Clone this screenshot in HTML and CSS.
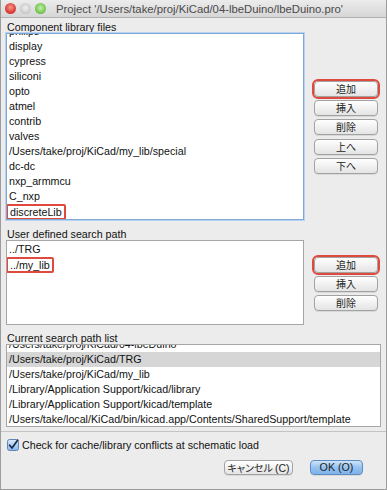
FILE: index.html
```html
<!DOCTYPE html>
<html lang="ja">
<head>
  <meta charset="UTF-8" />
  <title>Project</title>
  <link rel="stylesheet" href="styles.css">
</head>
<body>
  <div class="window">
    <div class="titlebar">
      <span class="light red"></span>
      <span class="light grey"></span>
      <span class="light green"></span>
      <span class="title">Project '/Users/take/proj/KiCad/04-lbeDuino/lbeDuino.pro'</span>
    </div>
    <div class="content">
      <div class="label">Component library files</div>
      <div class="group">
        <div class="list focus lib-list">
          <div class="item first"><span>philips</span></div>
          <div class="item">display</div>
          <div class="item">cypress</div>
          <div class="item">siliconi</div>
          <div class="item">opto</div>
          <div class="item">atmel</div>
          <div class="item">contrib</div>
          <div class="item">valves</div>
          <div class="item">/Users/take/proj/KiCad/my_lib/special</div>
          <div class="item">dc-dc</div>
          <div class="item">nxp_armmcu</div>
          <div class="item">C_nxp</div>
          <div class="item"><span class="mark">discreteLib</span></div>
        </div>
        <div class="btns lib-btns">
          <button class="btn marked">追加</button>
          <button class="btn">挿入</button>
          <button class="btn">削除</button>
          <button class="btn spaced">上へ</button>
          <button class="btn">下へ</button>
        </div>
      </div>

      <div class="label label-path">User defined search path</div>
      <div class="group">
        <div class="list path-list">
          <div class="item">../TRG</div>
          <div class="item"><span class="mark">../my_lib</span></div>
        </div>
        <div class="btns path-btns">
          <button class="btn marked">追加</button>
          <button class="btn">挿入</button>
          <button class="btn">削除</button>
        </div>
      </div>

      <div class="label label-current">Current search path list</div>
      <div class="list current-list">
        <div class="item first"><span>/Users/take/proj/KiCad/04-lbeDuino</span></div>
        <div class="item selected">/Users/take/proj/KiCad/TRG</div>
        <div class="item">/Users/take/proj/KiCad/my_lib</div>
        <div class="item">/Library/Application Support/kicad/library</div>
        <div class="item">/Library/Application Support/kicad/template</div>
        <div class="item">/Users/take/local/KiCad/bin/kicad.app/Contents/SharedSupport/template</div>
      </div>
    </div>

    <div class="footer">
      <label class="check">
        <svg width="12" height="12" viewBox="0 0 12 12">
          <defs>
            <linearGradient id="cb" x1="0" y1="0" x2="0" y2="1">
              <stop offset="0" stop-color="#dcebfb"/>
              <stop offset="1" stop-color="#86b6ea"/>
            </linearGradient>
          </defs>
          <rect x="0.5" y="0.5" width="11" height="11" rx="2" fill="url(#cb)" stroke="#5f86b3"/>
          <path d="M2.6 6.2 L5 9 L10.6 1.2" fill="none" stroke="#1b2849" stroke-width="1.7" stroke-linecap="round" stroke-linejoin="round"/>
        </svg>
        <span>Check for cache/library conflicts at schematic load</span>
      </label>
      <div class="actions">
        <button class="btn cancel">キャンセル <span class="key">(C)</span></button>
        <button class="btn ok">OK (O)</button>
      </div>
    </div>
  </div>
</body>
</html>
```

FILE: styles.css
```css
* { box-sizing: border-box; }
body {
  margin: 0;
  background: #ececec;
  font-family: "Liberation Sans", "Noto Sans CJK JP", sans-serif;
  font-size: 10.7px;
  color: #111;
}
.window {
  width: 387px;
  height: 490px;
  background: #ececec;
  border-left: 1px solid #9c9c9c;
  border-right: 1px solid #9c9c9c;
  border-bottom: 1px solid #9c9c9c;
  overflow: hidden;
}
.titlebar {
  height: 18px;
  display: flex;
  align-items: center;
  padding-left: 4px;
  gap: 4px;
  background: linear-gradient(#ececec, #d6d6d6);
  border-bottom: 1px solid #b2b2b2;
}
.light {
  width: 11px;
  height: 11px;
  border-radius: 50%;
}
.red { background: radial-gradient(circle at 50% 40%, #f39a92, #dc3e36 60%, #b4302a); }
.grey { background: radial-gradient(circle at 50% 45%, #eeeeee, #d2d2d2 55%, #a8a8a8); }
.green { background: radial-gradient(circle at 50% 45%, #c9efb5, #7bcd57 55%, #4e9a35); }
.title {
  margin-left: 6px;
  font-size: 11.3px;
  color: #4a4a4a;
  white-space: nowrap;
}
.content {
  padding: 3px 5px 0 5px;
}
.label {
  height: 12px;
  line-height: 12px;
  padding-left: 1px;
}
.label-path { margin-top: 8px; }
.label-current { margin-top: 7px; }
.group {
  display: flex;
}
.list {
  background: #fff;
  border: 1px solid #a6a6a6;
  overflow: hidden;
  white-space: nowrap;
}
.list.focus {
  border-color: #7ea8d8;
  box-shadow: 0 0 0 1px #b9d2ef;
}
.item {
  height: 15px;
  line-height: 15px;
  padding-left: 2px;
}
/* the lists are scrolled: only the lower part of the first row shows */
.item.first {
  overflow: hidden;
  display: flex;
  align-items: flex-end;
}
.item.first span { display: block; line-height: 15px; flex: none; }
.lib-list { width: 298px; height: 187px; }
.lib-list .first { height: 5px; }
.path-list { width: 298px; height: 85px; padding-top: 1px; }
.current-list { width: 375px; height: 83px; }
.current-list .first { height: 7px; }
.selected { background: #d6d6d6; }
.mark {
  display: inline-block;
  line-height: 12px;
  border: 2px solid #e0493d;
  border-radius: 2px;
  padding: 0 2px;
  margin-left: -3px;
}
.btns {
  display: flex;
  flex-direction: column;
  gap: 3px;
  margin-left: 10px;
}
.lib-btns { padding-top: 48px; }
.path-btns { padding-top: 17px; }
.btn {
  width: 64px;
  height: 16px;
  padding: 0;
  font-family: "Noto Sans CJK JP", "Liberation Sans", sans-serif;
  font-size: 10px;
  line-height: 14px;
  color: #222;
  white-space: nowrap;
  background: linear-gradient(#ffffff, #f1f1f1 50%, #e4e4e4);
  border: 1px solid #a2a2a2;
  border-radius: 4px;
  box-shadow: 0 1px 0 rgba(0,0,0,0.08);
}
.btn.marked { outline: 2px solid #e0493d; outline-offset: 0; }
.btn.spaced { margin-top: 1px; }
.footer {
  margin-top: 4px;
  border-top: 1px solid #c4c4c4;
  padding: 7px 5px 0 5px;
}
.check {
  display: flex;
  align-items: center;
  gap: 3px;
  height: 12px;
  padding-left: 1px;
}
.check svg { display: block; }
.actions {
  display: flex;
  justify-content: flex-end;
  gap: 17px;
  margin-top: 9px;
  padding-right: 18px;
}
.cancel {
  width: 69px;
  height: 15px;
  line-height: 13px;
  font-size: 10px;
  font-feature-settings: "palt";
}
.key { font-family: "Liberation Sans", sans-serif; font-size: 10.5px; }
.ok {
  width: 53px;
  height: 15px;
  line-height: 13px;
  font-family: "Liberation Sans", sans-serif;
  font-size: 10.7px;
  background: linear-gradient(#cfe4f9, #95c2f0 50%, #7fb2ea);
  border-color: #5d8dc4;
}
```
